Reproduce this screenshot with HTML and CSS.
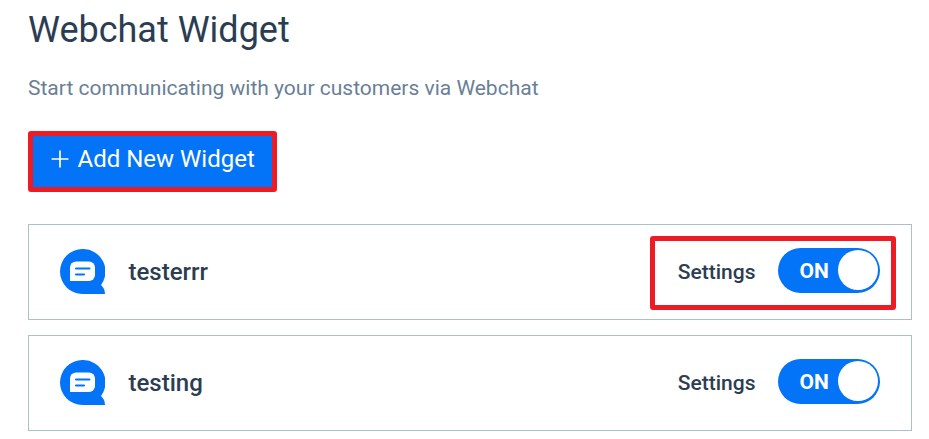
FILE: index.html
```html
<!DOCTYPE html>
<html lang="en">
<head>
    <meta charset="UTF-8">
    <title>Webchat Widget</title>
    <link rel="stylesheet" href="styles.css">
</head>
<body>
    <h1>Webchat Widget</h1>
    <p class="subtitle">Start communicating with your customers via Webchat</p>
    <button class="add-button">
        <svg class="plus" width="18" height="18" viewBox="0 0 18 18">
            <path d="M9 0.5V17.5M0.5 9H17.5" stroke="#fff" stroke-width="1.7" fill="none"/>
        </svg>
        <span>Add New Widget</span>
    </button>

    <div class="widget-list">
        <div class="widget">
            <svg class="widget-icon" width="45" height="45" viewBox="0 0 45 45">
                <path d="M22.5 0A22.5 22.5 0 0 1 41 36Q45 39.500 45 45H22.500A22.500 22.500 0 0 1 22.500 0Z" fill="#0374f8"/>
                <path d="M10 32V18.500A6 6 0 0 1 16 12.500H29A6 6 0 0 1 35 18.500V26A6 6 0 0 1 29 32Z" fill="#fff"/>
                <path d="M16 19.500H29.500M16 25.500H24" stroke="#0374f8" stroke-width="2" stroke-linecap="round"/>
            </svg>
            <span class="widget-name">testerrr</span>
            <div class="actions highlight">
                <a class="settings">Settings</a>
                <div class="toggle"><span class="toggle-label">ON</span><span class="knob"></span></div>
            </div>
        </div>
        <div class="widget">
            <svg class="widget-icon" width="45" height="45" viewBox="0 0 45 45">
                <path d="M22.5 0A22.5 22.5 0 0 1 41 36Q45 39.500 45 45H22.500A22.500 22.500 0 0 1 22.500 0Z" fill="#0374f8"/>
                <path d="M10 32V18.500A6 6 0 0 1 16 12.500H29A6 6 0 0 1 35 18.500V26A6 6 0 0 1 29 32Z" fill="#fff"/>
                <path d="M16 19.500H29.500M16 25.500H24" stroke="#0374f8" stroke-width="2" stroke-linecap="round"/>
            </svg>
            <span class="widget-name">testing</span>
            <div class="actions">
                <a class="settings">Settings</a>
                <div class="toggle"><span class="toggle-label">ON</span><span class="knob"></span></div>
            </div>
        </div>
    </div>
</body>
</html>
```
FILE: styles.css
```css
* {
    box-sizing: border-box;
}
body {
    font-family: Roboto, sans-serif;
    margin: 0;
    padding: 9px 17px 0 28px;
    background-color: #fff;
    color: #2b3d52;
}
h1 {
    margin: 0;
    font-size: 36px;
    font-weight: 400;
    line-height: 43px;
}
.subtitle {
    margin: 24px 0 30px;
    font-size: 21px;
    line-height: 25px;
    color: #6a7f96;
}
.add-button {
    display: flex;
    align-items: center;
    gap: 9px;
    width: 249px;
    height: 61px;
    padding: 0 0 5px 17.5px;
    border: 5px solid #ed1c24;
    border-radius: 3px;
    background-color: #0374f8;
    color: #fff;
    font-family: inherit;
    font-size: 24px;
    white-space: nowrap;
}
.widget-list {
    display: flex;
    flex-direction: column;
    gap: 15px;
    margin-top: 32px;
}
.widget {
    display: flex;
    align-items: center;
    height: 96px;
    padding: 0 15px 0 31px;
    border: 1px solid #a9c1c8;
}
.widget-icon {
    margin-bottom: 2px;
}
.widget-name {
    margin-left: 23.5px;
    font-size: 24px;
    font-weight: 500;
}
.actions {
    display: flex;
    align-items: center;
    height: 74px;
    margin: 2px 0 0 auto;
    padding: 0 11px 6px 23px;
    border: 5px solid transparent;
}
.highlight {
    border-color: #ed1c24;
    border-radius: 3px;
}
.settings {
    margin-right: 22.5px;
    padding-top: 3px;
    font-size: 21px;
    font-weight: 500;
}
.toggle {
    display: flex;
    align-items: center;
    justify-content: space-between;
    width: 102px;
    height: 45px;
    padding: 0 2px 0 21.5px;
    border-radius: 23px;
    background-color: #0374f8;
}
.toggle-label {
    padding-top: 1px;
    color: #fff;
    font-size: 21px;
    font-weight: 700;
}
.knob {
    width: 40px;
    height: 40px;
    border-radius: 50%;
    background-color: #fff;
}
```
